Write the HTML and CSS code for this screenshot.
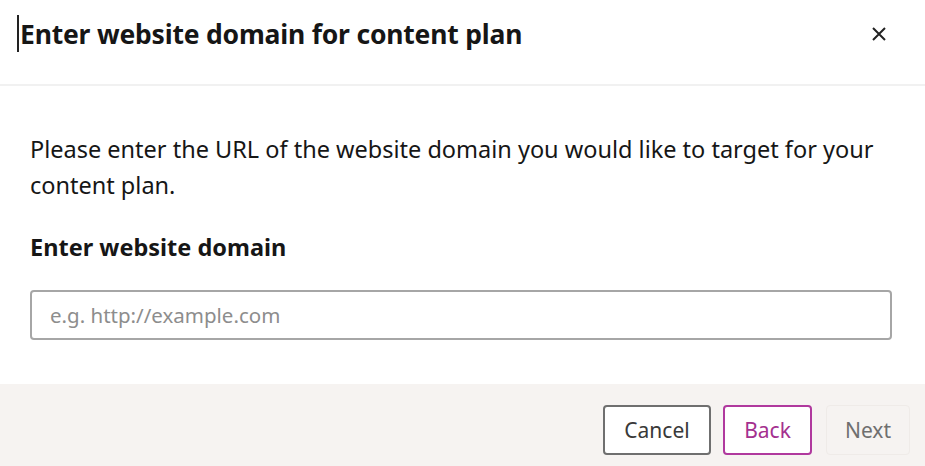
FILE: index.html
```html
<!DOCTYPE html>
<html lang="en">
<head>
<meta charset="utf-8">
<title>Enter website domain</title>
<link rel="stylesheet" href="styles.css">
</head>
<body>
<div class="modal">
  <header class="modal-header">
    <h1 class="modal-title"><span class="caret"></span>Enter website domain for content plan</h1>
    <button class="close" aria-label="Close">
      <svg width="16" height="16" viewBox="0 0 16 16"><path d="M2 2 L14 14 M14 2 L2 14" stroke="#222" stroke-width="2" fill="none"/></svg>
    </button>
  </header>
  <section class="modal-body">
    <p class="intro">Please enter the URL of the website domain you would like to target for your content plan.</p>
    <label class="field-label" for="domain">Enter website domain</label>
    <input id="domain" class="field" type="text" placeholder="e.g. http://example.com">
  </section>
  <footer class="modal-footer">
    <button class="btn btn-cancel">Cancel</button>
    <button class="btn btn-back">Back</button>
    <button class="btn btn-next">Next</button>
  </footer>
</div>
</body>
</html>
```
FILE: styles.css
```css
* { box-sizing: border-box; }
html, body { margin: 0; padding: 0; background: #fff; }
body {
  font-family: "Noto Sans", "Open Sans", "Liberation Sans", sans-serif;
  color: #161616;
  width: 925px;
  height: 466px;
  overflow: hidden;
}
.modal { display: flex; flex-direction: column; height: 466px; }
.modal-header {
  height: 86px;
  display: flex;
  align-items: center;
  justify-content: space-between;
  padding: 0 38px 0 17px;
  border-bottom: 2px solid #f1f1f1;
  flex: none;
}
.modal-title {
  margin: 0;
  font-size: 26.5px;
  font-weight: 700;
  letter-spacing: -0.2px;
  display: flex;
  align-items: center;
  margin-top: -17px;
}
.caret {
  display: inline-block;
  width: 2px;
  height: 37px;
  background: #222;
  margin-right: 1px;
}
.close {
  background: none;
  border: 0;
  padding: 0;
  width: 16px;
  height: 16px;
  margin-top: -16px;
  display: flex;
}
.modal-body {
  flex: 1;
  padding: 45px 33px 0 30px;
}
.intro {
  margin: 0;
  font-size: 23.5px;
  line-height: 36px;
  color: #161616;
  max-width: 862px;
}
.field-label {
  display: block;
  margin-top: 29px;
  font-size: 23.5px;
  font-weight: 700;
  line-height: 30px;
}
.field {
  display: block;
  width: 100%;
  margin-top: 28px;
  height: 50px;
  border: 2px solid #a6a6a6;
  border-radius: 4px;
  padding: 0 18px;
  font-family: inherit;
  font-size: 20.5px;
  color: #161616;
  outline: none;
}
.field::placeholder { color: #8d8d8d; }
.modal-footer {
  height: 82px;
  flex: none;
  background: #f6f3f1;
  display: flex;
  justify-content: flex-end;
  align-items: flex-start;
  gap: 12px;
  padding: 21px 15px 0 0;
}
.btn {
  height: 50px;
  font-family: inherit;
  font-size: 21px;
  border-radius: 4px;
  background: #fff;
  padding: 0;
}
.btn-cancel { width: 108px; border: 2px solid #6f6f6f; color: #393939; }
.btn-back { width: 89px; border: 2px solid #b0399e; color: #a4308f; }
.btn-next { width: 84px; border: 1px solid #efebe8; background: #f6f3f1; color: #6f6f6f; margin-left: 2px; }
```
